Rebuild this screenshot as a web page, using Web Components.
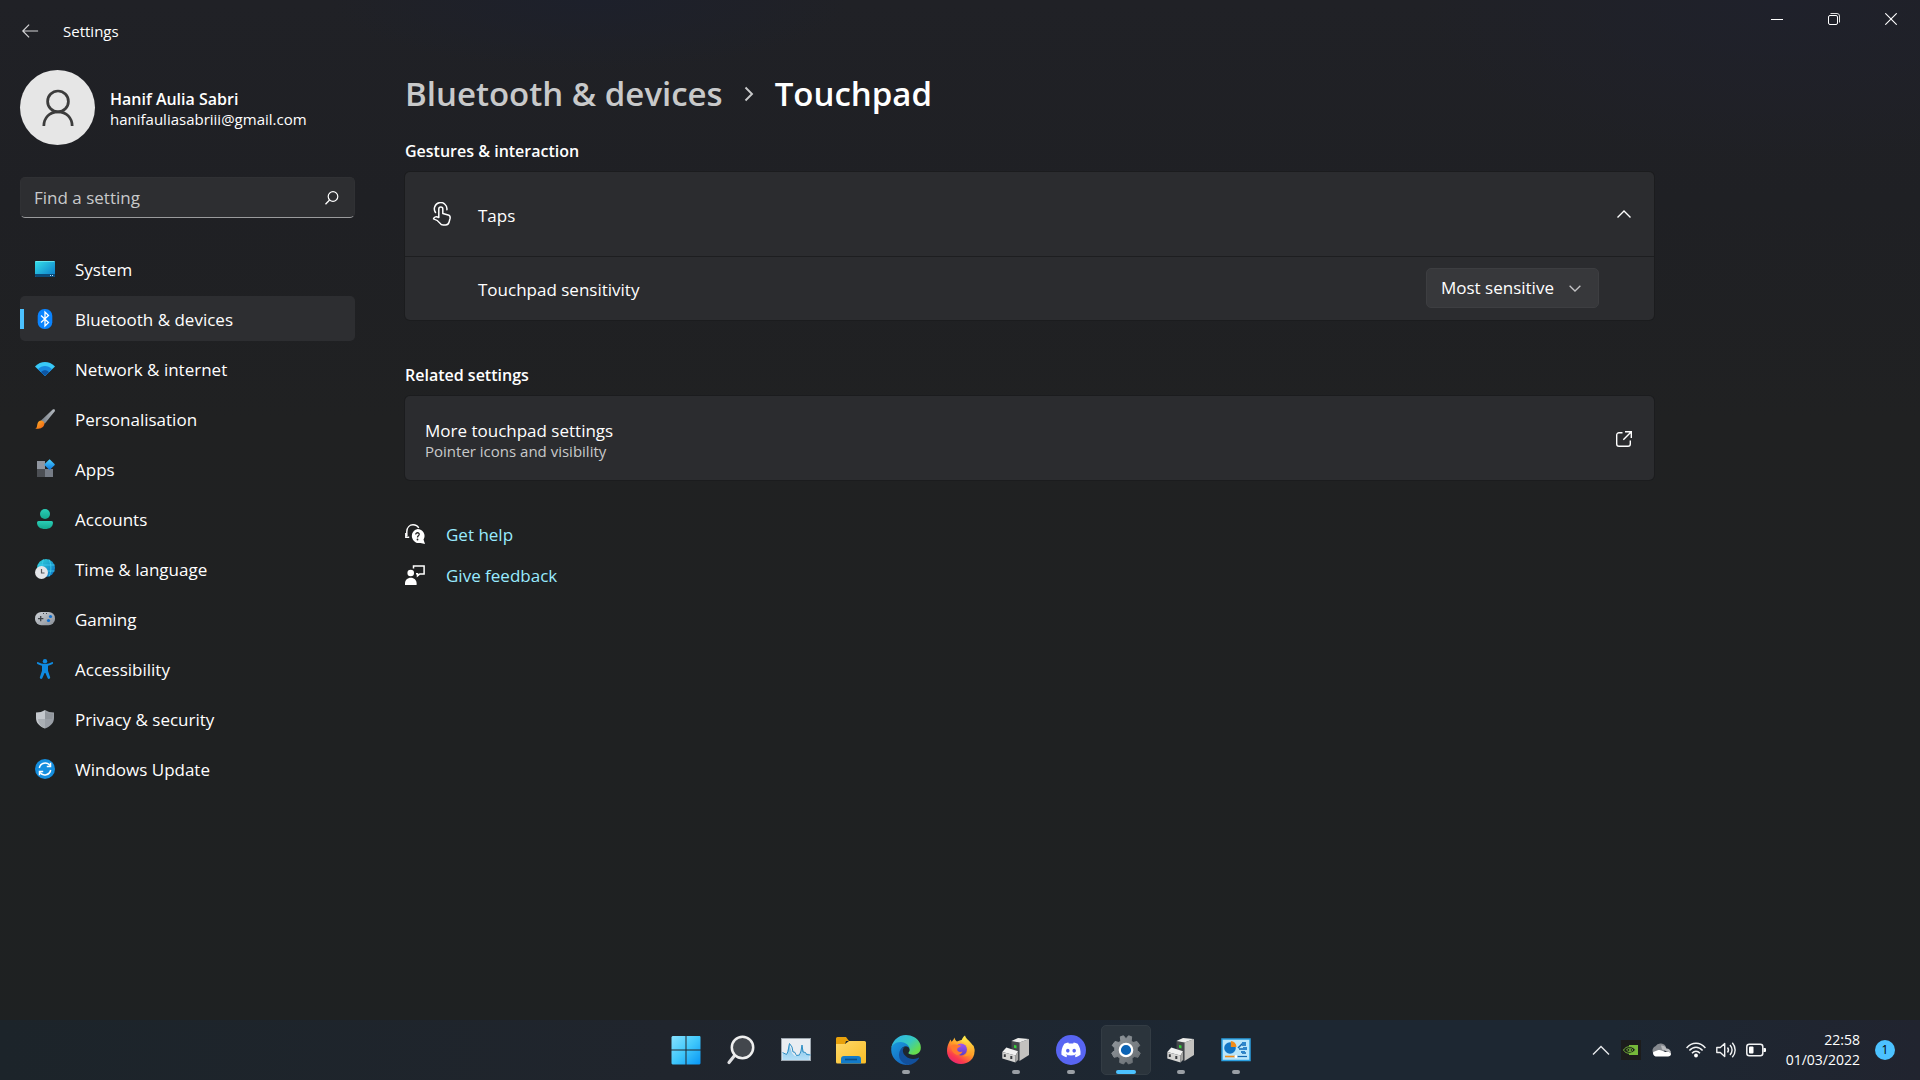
<!DOCTYPE html>
<html lang="en">
<head>
<meta charset="utf-8">
<title>Settings</title>
<style>
  html, body { height: 100%; }
  body {
    margin: 0;
    background: #1f2022;
    color: #fff;
    font-family: "Open Sans", "Noto Sans", sans-serif;
    font-size: 17px;
    line-height: 20px;
    --accent: #4cc2ff;
    --card: #2b2c2f;
    --muted: #c8c9ca;
    --link: #99ebff;
  }
</style>
</head>
<body>
<settings-desktop></settings-desktop>

<script>
const ICONS = {
  back: ['0 0 20 20', '<path d="M19 10H2M9 3L2 10l7 7" fill="none" stroke="#d4d4d6" stroke-width="1.3"/>'],
  minimize: ['0 0 12 12', '<path d="M0 6.5h12" stroke="#fff"/>'],
  restore: ['0 0 12 12', '<rect x=".5" y="2.5" width="9" height="9" rx="1.5" fill="none" stroke="#fff"/><path d="M2.5 .5H9A2.5 2.5 0 0 1 11.5 3v6.500" fill="none" stroke="#ddd"/>'],
  close: ['0 0 12 12', '<path d="M.3.3l11.400 11.400M11.700.3L.3 11.700" stroke="#fff" stroke-width="1.1"/>'],
  person: ['0 0 36 40', '<g fill="none" stroke="#3c3c3c" stroke-width="2.900"><circle cx="18" cy="13" r="11"/><path d="M3 39c0-8.500 6-15 15-15s15 6.500 15 15"/></g>'],
  search: ['0 0 14 14', '<circle cx="8" cy="5.500" r="4.800" fill="none" stroke="#fff" stroke-width="1.200"/><path d="M4.600 9L.5 13.200" stroke="#fff" stroke-width="1.300"/>'],
  system: ['0 0 20 20', '<defs><linearGradient id="a" x1="0" y1="0" x2="1" y2="1"><stop stop-color="#35e0ea"/><stop offset="1" stop-color="#0a77c8"/></linearGradient></defs><rect y="2" width="20" height="16" rx="1" fill="url(#a)"/><path d="M0 15h20v2a1 1 0 0 1-1 1H1a1 1 0 0 1-1-1z" fill="#0b4a78"/><path d="M15 16.500h1M17 16.500h1" stroke="#b9e4ff"/><path d="M.5 2.500h19" stroke="#7df0f4" opacity=".7"/>'],
  bluetooth: ['0 0 20 20', '<rect x="2.700" width="14.600" height="20" rx="6.700" fill="#0a84ff"/><path d="M6 6.500l7.500 7L10 17V3l3.500 3.500L6 13.500" fill="none" stroke="#fff" stroke-width="1.300"/>'],
  network: ['0 0 20 20', '<path d="M0 7.500C6 1.600 14 1.600 20 7.500L10 17z" fill="#38c9f7"/><path d="M2.900 10.300c4.500-4.300 9.700-4.300 14.200 0L10 17z" fill="#1787dd"/><path d="M6 13.200c2.500-2.500 5.500-2.500 8 0l-4 3.800z" fill="#0c55a3"/>'],
  brush: ['0 0 20 20', '<defs><linearGradient id="a"><stop stop-color="#777e86"/><stop offset="1" stop-color="#b4bac0"/></linearGradient><linearGradient id="b" x1="0" y1="0" x2="1" y2="1"><stop stop-color="#ffb629"/><stop offset="1" stop-color="#ef5d12"/></linearGradient></defs><path d="M6 11.500L17.700.6c1.500-1.100 2.900.3 1.900 1.900L9.700 14.800z" fill="url(#a)"/><path d="M6.300 11.500c1.800.3 3 1.500 3.100 3.400-.4 3.300-3.900 5.300-9.100 4.900 1.900-1 1.500-2.300 2-4.400.5-2.400 1.900-3.900 4-3.900z" fill="url(#b)"/>'],
  apps: ['0 0 20 20', '<defs><linearGradient id="a" x1="0" y1="0" x2="1" y2="1"><stop stop-color="#4fd4ff"/><stop offset="1" stop-color="#0a74dd"/></linearGradient></defs><path d="M2 2h8v8H2z" fill="#9096a0"/><path d="M2 10h8v8H2z" fill="#4c4f54"/><path d="M10 10h8v8h-8z" fill="#767c86"/><rect x="10.700" y="1.700" width="7.800" height="7.800" rx=".8" fill="url(#a)" transform="rotate(45 14.600 5.600)"/>'],
  accounts: ['0 0 20 20', '<defs><linearGradient id="a" x1="0" y1="0" x2="0" y2="1"><stop stop-color="#2acdb6"/><stop offset="1" stop-color="#14a88e"/></linearGradient></defs><circle cx="10" cy="5" r="5" fill="url(#a)"/><path d="M2 13.500a1.500 1.500 0 0 1 1.500-1.500h13a1.500 1.500 0 0 1 1.500 1.500C18 18 14.500 20 10 20s-8-2-8-6.500z" fill="url(#a)"/>'],
  time: ['0 0 20 20', '<defs><linearGradient id="a" x1="0" y1="0" x2="1" y2="1"><stop stop-color="#2fd6d8"/><stop offset="1" stop-color="#0a6cc4"/></linearGradient></defs><circle cx="11" cy="9" r="9" fill="url(#a)"/><path d="M3 6h16.500M3 12h16.500M8.500.5c-2 5-2 12 0 17M14 .5c2.500 5 2.500 12 0 17" fill="none" stroke="#41cdf0" opacity=".8"/><circle cx="6.500" cy="13.500" r="6.500" fill="#e3e5e8"/><path d="M6.500 10v4h3" fill="none" stroke="#55585c" stroke-width="1.200"/>'],
  gaming: ['0 0 20 20', '<defs><linearGradient id="a" x1="0" y1="0" x2="1" y2="1"><stop stop-color="#d0d4d9"/><stop offset="1" stop-color="#878d95"/></linearGradient></defs><rect y="3" width="20" height="13.200" rx="6.300" fill="url(#a)"/><path d="M3 9.600h5.400M5.700 7v5.300" stroke="#3d4146" stroke-width="1.300"/><circle cx="15.500" cy="7.500" r="1.600" fill="#0f6fcf"/><circle cx="13.500" cy="11.500" r="1.600" fill="#0f6fcf"/><path d="M8 4.500h1M11 4.500h1" stroke="#44484d"/>'],
  accessibility: ['0 0 20 20', '<g fill="#0f8ae0"><circle cx="10" cy="2.200" r="2.200"/><path d="M2.700 3c2.300 1.200 4.600 1.900 7.300 1.900s5-.7 7.300-1.900c1 .2 1 1.500.3 1.900-1.600.9-3 1.400-4.600 1.800v5l2.200 6.800c0 1.600-1.900 1.900-2.500.7L10.400 14h-.8l-2.300 5.200c-.6 1.200-2.500.9-2.500-.7L7 11.700v-5C5.400 6.300 4 5.800 2.400 4.900c-.7-.4-.7-1.700.3-1.900z"/></g>'],
  shield: ['0 0 20 20', '<path d="M10 1C7.500 2.700 4.500 3.500 1 3.500V9c0 5 3.500 8.400 9 10.500z" fill="#c4c8cd"/><path d="M10 1c2.500 1.700 5.500 2.500 9 2.500V9c0 5-3.500 8.400-9 10.500z" fill="#9a9fa6"/><path d="M3 10h7v9.500C6.500 18 3.500 15 3 10zM10 3v7h7l1-5c-3 0-6-.8-8-2z" fill="#85898f" opacity=".4"/>'],
  update: ['0 0 20 20', '<circle cx="10" cy="10" r="10" fill="#148edf"/><path d="M4.300 9A6 6 0 0 1 15 6.500M15.700 11A6 6 0 0 1 5 13.500" fill="none" stroke="#fff" stroke-width="1.500"/><path d="M15.500 3.800v3.700h-3.700M4.500 16.200v-3.700h3.700" fill="none" stroke="#fff" stroke-width="1.500"/>'],
  tap: ['0 0 20 24', '<g fill="none" stroke="#fff" stroke-width="1.500" stroke-linejoin="round" stroke-linecap="round"><path d="M3.500 10.500a6.300 6.300 0 1 1 11.400-2.800"/><path d="M6.800 15.500V6.900a2 2 0 0 1 4 0v4.600l5.300 1.400c1.700.5 2.300 1.700 2 3.300l-1 3.800c-.5 2-1.800 3-3.600 3h-2.300c-1.500 0-2.500-.7-3.300-1.900-1.500-2-3.700-3.400-6.400-4.200.7-2.300 3-2.600 5.300-1.400z"/></g>'],
  up: ['0 0 14 8', '<path d="M.5 7.500L7 1l6.500 6.500" fill="none" stroke="#fff" stroke-width="1.400"/>'],
  down: ['0 0 10 6', '<path d="M.4.600L5 5.200 9.600.600" fill="none" stroke="#c4c4c6" stroke-width="1.100"/>'],
  crumb: ['0 0 10 16', '<path d="M1.500 1.500L8 8l-6.500 6.500" fill="none" stroke="#c8c9ca" stroke-width="1.900"/>'],
  external: ['0 0 16 16', '<path d="M6.500 1.700H3A2.300 2.300 0 0 0 .700 4v9A2.300 2.300 0 0 0 3 15.300h9a2.300 2.300 0 0 0 2.300-2.300V9.500M9 .7h6.300V7M15.300.7L7.300 8.700" fill="none" stroke="#fff" stroke-width="1.400"/>'],
  help: ['0 0 20 20', '<path d="M1.800 12V7.500C2 3.500 4.700.8 8 .8c2.800 0 4.700 1.200 5.700 3.200" fill="none" stroke="#fff" stroke-width="1.500"/><path d="M.9 9v4.300h3.300" fill="none" stroke="#fff" stroke-width="1.600"/><path d="M12.500 5a7 7 0 0 1 6 10.600l1.500 4.300-4.600-1A7 7 0 1 1 12.500 5z" fill="#fff"/><path d="M10.700 10.500c.1-2.500 3.700-2.200 3.500 0-.1 1.300-1.700 1.400-1.700 2.900" fill="none" stroke="#222" stroke-width="1.300"/><circle cx="12.500" cy="15.500" r=".9" fill="#222"/>'],
  feedback: ['0 0 20 20', '<circle cx="5.700" cy="8" r="3.300" fill="#fff"/><path d="M0 20v-1.700C0 15 2.500 12.700 5.800 12.700s5.800 2.300 5.800 5.600V20z" fill="#fff"/><path d="M8.500 3.500V.9h10.600v8h-4.300l-2.300 1.900V8.700H11" fill="none" stroke="#fff" stroke-width="1.500"/>'],
  start: ['0 0 30 30', '<defs><linearGradient id="a" gradientUnits="userSpaceOnUse" x1="0" y1="0" x2="30" y2="30"><stop stop-color="#8be3ff"/><stop offset=".5" stop-color="#41c8fb"/><stop offset="1" stop-color="#0594f5"/></linearGradient></defs><path d="M1.500 1H14.500V14.500H.5V2zM15.500 1H29l.5 1v12.500h-14zM.5 15.500h14v14h-13l-1-1zM15.500 15.500h14v13l-1 1h-13z" fill="url(#a)"/>'],
  find: ['0 0 30 30', '<path d="M9.800 19L3 27.500" stroke="#dfe0e2" stroke-width="3.200" stroke-linecap="round"/><circle cx="16.500" cy="12.500" r="10.700" fill="#43474d" stroke="#efefef" stroke-width="2.500"/>'],
  monitor: ['0 0 30 30', '<defs><linearGradient id="a" x1="0" y1="0" x2="0" y2="1"><stop stop-color="#3fa9e4"/><stop offset="1" stop-color="#9ad8fa"/></linearGradient></defs><rect x=".5" y="3.500" width="29" height="22" fill="#e9edf2" stroke="#9ea7b0"/><path d="M1.500 18l4 2L8 9l3 9 3 3 3-1 2.500 0L21 10l2 8 5.500 1v6h-27z" fill="url(#a)" opacity=".65"/><path d="M1.500 17.500l4 2 1.500-3L8.500 8.500 11 12l1 5h1.500l2 3.500 3-.5 1.500-4 1-6 1 7 2.500.5 1 2 4 .5" fill="none" stroke="#2c8dc4"/>'],
  folder: ['0 0 30 30', '<defs><linearGradient id="a" x1="0" y1="0" x2="1" y2="1"><stop stop-color="#ffd96a"/><stop offset="1" stop-color="#f9bd26"/></linearGradient></defs><path d="M0 3.500A1.500 1.500 0 0 1 1.500 2H10l3 4h-3L8 12H0z" fill="#e8a10c"/><path d="M0 9h9l4-3h15.500A1.500 1.500 0 0 1 30 7.500V27a1.500 1.500 0 0 1-1.500 1.500h-27A1.500 1.500 0 0 1 0 27z" fill="url(#a)"/><path d="M5 28.500V24a3 3 0 0 1 3-3h14a3 3 0 0 1 3 3v4.500z" fill="#137bc9"/><path d="M9 24.500h12" stroke="#0a4f87" stroke-width="1.600"/>'],
  edge: ['0 0 256 259', '<defs><linearGradient id="a" x1=".2" y1="0" x2="1" y2=".6"><stop stop-color="#2fb5e4"/><stop offset=".55" stop-color="#36c9c0"/><stop offset="1" stop-color="#65dc4e"/></linearGradient><linearGradient id="b" x1="0" y1="0" x2=".6" y2="1"><stop stop-color="#1a9de0"/><stop offset="1" stop-color="#1467c0"/></linearGradient></defs><path fill="#12509c" d="M235.680 195.460a93.730 93.730 0 0 1-10.540 4.710 101.870 101.870 0 0 1-35.900 6.460c-47.320 0-88.540-32.550-88.540-74.320A31.480 31.480 0 0 1 117.130 105c-42.800 1.800-53.800 46.400-53.800 72.530 0 73.880 68.090 81.370 82.760 81.370 7.910 0 19.840-2.300 27-4.560l1.310-.44a128.340 128.340 0 0 0 66.600-52.800 4 4 0 0 0-5.320-5.640z"/><path fill="url(#b)" d="M105.730 241.420A79.200 79.200 0 0 1 83 220.080a80.720 80.720 0 0 1 29.520-120c3.120-1.470 8.450-4.130 15.540-4a32.350 32.350 0 0 1 25.690 13 31.880 31.880 0 0 1 6.360 18.660c0-.21 24.460-79.600-80-79.600-43.900 0-80 41.660-80 78.210a130.150 130.150 0 0 0 12.110 56 128 128 0 0 0 156.380 67.110 75.550 75.550 0 0 1-62.780-8z"/><path fill="url(#a)" d="M152.330 148.860c-.81 1.050-3.300 2.500-3.300 5.660 0 2.610 1.700 5.120 4.720 7.230 14.380 10 41.490 8.680 41.560 8.680a59.560 59.560 0 0 0 30.270-8.350 61.380 61.380 0 0 0 30.430-52.880c.26-22.410-8-37.310-11.340-43.910-21.190-41.440-66.920-65.280-116.670-65.280a128 128 0 0 0-128 126.200c.48-36.540 36.800-66.050 80-66.050 3.500 0 23.460.34 42 10.070 16.340 8.580 24.900 18.940 30.850 29.210 6.180 10.670 7.280 24.150 7.280 29.520s-2.740 13.330-7.800 19.900z"/>'],
  firefox: ['0 0 30 30', '<defs><linearGradient id="a" x1=".8" y1=".1" x2=".2" y2="1"><stop stop-color="#ffe44a"/><stop offset=".4" stop-color="#ff9a26"/><stop offset=".75" stop-color="#fb3a4e"/><stop offset="1" stop-color="#e2227c"/></linearGradient><linearGradient id="b" x1="0" y1="0" x2="0" y2="1"><stop stop-color="#a455f0"/><stop offset="1" stop-color="#5a3fc8"/></linearGradient><linearGradient id="c" x1=".5" y1="0" x2=".5" y2="1"><stop stop-color="#fff04c"/><stop offset="1" stop-color="#ff9524"/></linearGradient></defs><path d="M3.500 6.500c.4-1 .8-1.500 1.300-2 .1 1.200.4 1.800.8 2.200C7 5.800 8 3.500 8.500 2.500c.3 1.800 1 3.200 2.500 4 4-2.500 9-2 12 1 2-.6 5.500 4.500 5.500 9C28.500 24 22.500 29 15 29S1 23.500 1 16c0-3.500.9-6.500 2.500-9.500z" fill="url(#a)"/><circle cx="15" cy="14.500" r="6" fill="url(#b)"/><path d="M19 .5c-1.700 1.300-3.300 3.300-3.600 6 3.600.6 6.300 3 6.700 6.800.3 3.700-1.700 6.700-5 8 6.400.2 11.400-2 11.400-6.500 0-2.300-.9-4.300-2-5.300l-.4 1.500C25.600 6 20 5 19 .5z" fill="url(#c)"/><path d="M5 11c2-2 5-1.500 6.500-1l3.500.5c0 1.500-3.500 1.700-3.800 3.700-.2 2.800 3.300 3.300 5.300 2.300-1 3-4.500 4.500-7.500 2.500C6.500 17.300 5 14.500 5 11z" fill="#ff7a2c"/>'],
  device: ['0 0 30 30', '<path d="M10.500 6l8 1.500V26l-8-4z" fill="#44474a"/><path d="M18.500 7.500L28 4v16l-9.500 6z" fill="#c3c2bf"/><path d="M10.500 6L17 3l11 1-9.500 3.500z" fill="#ececea"/><path d="M13 10l2.500.6v2.800l-2.500-.6z" fill="#35d23a"/><path d="M1.300 17l4-4.500 11.700 3.700-2.500 4.300z" fill="#f1f1f0"/><path d="M1.300 17l13.200 3.500v7L1.300 23.500z" fill="#d5d5d3"/><path d="M14.500 20.500l2.500-4.300V25l-2.500 2.500z" fill="#a3a3a1"/><path d="M3.800 19.300v2.800M10.300 21v3" stroke="#3b3d40" stroke-width="2"/>'],
  discord: ['0 0 30 30', '<circle cx="15" cy="15" r="15" fill="#5865f2"/><path transform="translate(5.400 5.300) scale(.8)" fill="#fff" d="M20.317 4.370a19.791 19.791 0 00-4.885-1.515.074.074 0 00-.079.037c-.211.375-.445.865-.608 1.250-1.845-.276-3.680-.276-5.487 0-.164-.393-.406-.874-.618-1.250a.077.077 0 00-.079-.037 19.736 19.736 0 00-4.885 1.515.070.070 0 00-.032.028C.533 9.046-.319 13.580.099 18.058a.082.082 0 00.031.056c2.053 1.508 4.041 2.423 5.993 3.029a.078.078 0 00.084-.028c.462-.630.873-1.295 1.226-1.994a.076.076 0 00-.042-.106c-.653-.248-1.274-.550-1.872-.892a.077.077 0 01-.008-.128c.126-.094.252-.192.372-.291a.074.074 0 01.078-.011c3.928 1.793 8.180 1.793 12.061 0a.074.074 0 01.079.010c.120.099.246.198.373.292a.077.077 0 01-.007.128 12.299 12.299 0 01-1.873.891.077.077 0 00-.041.107c.360.698.772 1.363 1.225 1.993a.076.076 0 00.084.029c1.961-.607 3.950-1.522 6.002-3.029a.077.077 0 00.031-.055c.500-5.177-.838-9.674-3.549-13.660a.061.061 0 00-.031-.029zM8.020 15.331c-1.183 0-2.157-1.086-2.157-2.419 0-1.333.956-2.419 2.157-2.419 1.211 0 2.176 1.095 2.157 2.419 0 1.333-.956 2.419-2.157 2.419zm7.975 0c-1.183 0-2.157-1.086-2.157-2.419 0-1.333.955-2.419 2.157-2.419 1.211 0 2.176 1.095 2.157 2.419 0 1.333-.946 2.419-2.157 2.419z"/>'],
  gear: ['0 0 30 30', '<defs><linearGradient id="a" x1="0" y1="0" x2="1" y2="1"><stop stop-color="#949a9f"/><stop offset="1" stop-color="#646a6f"/></linearGradient></defs><path d="M9.800 5.800L9.300 1.800 12.500 .8 15 3.800 17.500 .8 20.700 1.800 20.200 5.800 22 7.500 26 6.500 28.800 10.500 26.200 13 26.300 15.500 29.300 18 27 22.300 23.200 21.500 21 23.300 21.300 27.500 17.500 29 15 26 12.500 29 8.700 27.500 9 23.300 6.800 21.500 3 22.300.700 18 3.700 15.500 3.800 13 1.200 10.500 4 6.500 8 7.500z" fill="url(#a)" stroke="url(#a)" stroke-linejoin="round"/><circle cx="15" cy="15" r="6.200" fill="#0b63b5" stroke="#fff" stroke-width="2.200"/>'],
  panel: ['0 0 30 30', '<rect x="1" y="4" width="28" height="21.500" fill="#b9e6fb" stroke="#2a9fe0" stroke-width="1.500"/><circle cx="9" cy="13" r="5.800" fill="#1175c5"/><path d="M9.800 12V6A6 6 0 0 1 15.500 12z" fill="#f28c18"/><path d="M17 13l4-4h3M18 14h7M21 10h4M21 18h4" fill="none" stroke="#1368b0" stroke-width="1.500"/><path d="M21 7h4v3h-4zM22 12h4v3h-4zM20 16h4v2h-4z" fill="#2c86cc"/><path d="M4 21.500h10" stroke="#f28c18" stroke-width="1.600"/><path d="M16 21.500h10" stroke="#1368b0" stroke-width="1.200"/><circle cx="15" cy="21.500" r="1.500" fill="#fff"/>'],
  trayup: ['0 0 20 20', '<path d="M2 14.500l8-8 8 8" fill="none" stroke="#e8eaec" stroke-width="1.400"/>'],
  nvidia: ['0 0 20 20', '<path d="M0 0h20v20H0z" fill="#1c1c1c"/><path d="M8 5h9v10H8z" fill="#76b93a"/><path d="M2.500 10c2-3 5.500-4 8.500-3 1.500.5 2.500 1.500 3.500 3-2 2.500-6 4.200-9 2.700-1.500-.6-2.400-1.600-3-2.700z" fill="#1c1c1c" stroke="#76b93a"/><path d="M5.500 10c1.500-2 4.500-2.500 6.500 0-1.500 2-4.500 2.200-6.500 0z" fill="none" stroke="#76b93a"/><circle cx="9" cy="10" r="1" fill="#76b93a"/>'],
  cloud: ['0 0 20 20', '<path d="M5 15.500a5 5 0 0 1-.6-9.300 6 6 0 0 1 10.800 1.600L10 15.500z" fill="#85898e"/><path d="M10 5.500a6 6 0 0 1 5.500 3A4.500 4.500 0 0 1 20 13l-9-3.500z" fill="#b8babd"/><path d="M4.500 16.500A4 4 0 0 1 2.200 12l4.500-1.700c1.500-.7 2.800-.4 3.700.2l4 1.500c3-.8 5.600.2 5.600 2 0 1.500-1.300 2.500-3 2.500z" fill="#fff"/>'],
  wifi: ['0 0 20 20', '<g fill="none" stroke="#f1f2f3" stroke-width="1.500"><path d="M.6 8C6 1.700 14 1.700 19.400 8"/><path d="M3.400 10.600c3.900-4.500 9.300-4.500 13.200 0"/><path d="M6 13.300c2.400-2.700 5.600-2.700 8 0"/></g><circle cx="10" cy="15.500" r="1.900" fill="#fff"/>'],
  volume: ['0 0 20 20', '<g fill="none" stroke="#f1f2f3" stroke-width="1.400" stroke-linejoin="round"><path d="M.8 7.500h3.500L8.700 3.500v13L4.300 12.500H.8z"/><path d="M11.500 7.500c1.200 1.500 1.200 3.500 0 5M14 5c2.500 3 2.500 7 0 10M16.300 2.700c3.800 4.300 3.800 10.300 0 14.600"/></g>'],
  battery: ['0 0 20 20', '<rect x=".8" y="4.300" width="16" height="11.400" rx="2.500" fill="none" stroke="#f1f2f3" stroke-width="1.500"/><path d="M17.500 8H19a1 1 0 0 1 1 1v2a1 1 0 0 1-1 1h-1.500z" fill="#fff"/><rect x="3" y="6.500" width="4.500" height="7" rx="1" fill="#fff"/>']
};

const define = (name, html, setup) => {
  const template = document.createElement('template');
  template.innerHTML = '<style>*{box-sizing:border-box}:host{display:block}:host([hidden]){display:none}</style>' + html;
  customElements.define(name, class extends HTMLElement {
    constructor() {
      super();
      this.attachShadow({ mode: 'open' }).append(template.content.cloneNode(true));
    }
    connectedCallback() {
      if (setup) setup(this, this.shadowRoot);
    }
  });
};

customElements.define('ui-icon', class extends HTMLElement {
  static observedAttributes = ['name'];
  constructor() {
    super();
    this.attachShadow({ mode: 'open' }).innerHTML = `
<style>
  :host { display: inline-flex; flex: none; width: var(--w, 20px); height: var(--h, var(--w, 20px)); }
  svg { width: 100%; height: 100%; display: block; }
</style>
<svg aria-hidden="true"></svg>`;
  }
  attributeChangedCallback(attribute, before, name) {
    if (!ICONS[name]) return;
    const svg = this.shadowRoot.querySelector('svg');
    svg.setAttribute('viewBox', ICONS[name][0]);
    svg.innerHTML = ICONS[name][1];
  }
});

const passIcon = (el, root) => root.querySelector('ui-icon').setAttribute('name', el.getAttribute('icon'));

define('title-bar', `
<style>
  :host { display: flex; justify-content: space-between; height: 60px; padding-left: 12px; }
  .left { display: flex; align-items: center; gap: 15px; padding-top: 2px; font-size: 15px; }
  .right { display: flex; align-items: flex-start; padding-right: 1px; }
  button { display: grid; place-items: center; border: 0; padding: 0; background: none; color: inherit; }
  .left button { width: 36px; height: 36px; --w: 18px; }
  .right button { width: 57px; height: 38px; --w: 12px; }
</style>
<div class="left">
  <button aria-label="Back"><ui-icon name="back"></ui-icon></button>
  <span>Settings</span>
</div>
<div class="right">
  <button aria-label="Minimise"><ui-icon name="minimize"></ui-icon></button>
  <button aria-label="Restore"><ui-icon name="restore"></ui-icon></button>
  <button aria-label="Close"><ui-icon name="close"></ui-icon></button>
</div>`);

define('user-card', `
<style>
  :host { display: flex; align-items: center; gap: 15px; }
  .avatar { display: grid; place-items: center; width: 75px; height: 75px; border-radius: 50%; background: #e6e6e6; --w: 34px; --h: 38px; }
  .text { padding-top: 2px; }
  .name { font-size: 16px; font-weight: 600; }
  .mail { font-size: 15px; }
</style>
<div class="avatar"><ui-icon name="person"></ui-icon></div>
<div class="text">
  <div class="name"><slot name="name"></slot></div>
  <div class="mail"><slot name="mail"></slot></div>
</div>`);

define('search-box', `
<style>
  label { display: flex; align-items: center; height: 41px; padding: 0 15px 0 13px; border-radius: 5px;
    border: 1px solid #303134; border-bottom-color: #9a9b9d; background: #2d2e31; --w: 14px; }
  input { flex: 1; min-width: 0; padding: 0; border: 0; outline: 0; background: none; color: inherit; font: inherit; }
  input::placeholder { color: #c8c9ca; opacity: 1; }
</style>
<label><input type="text" placeholder="Find a setting" aria-label="Find a setting"><ui-icon name="search"></ui-icon></label>`);

define('nav-item', `
<style>
  a { display: flex; align-items: center; gap: 20px; height: 45px; padding-left: 15px; border-radius: 5px;
    color: inherit; text-decoration: none; }
  span { padding-top: 2px; }
  :host([selected]) a { background: linear-gradient(90deg, var(--accent), var(--accent)) left center / 4px 20px no-repeat #2d2e31; }
</style>
<a href="#"><ui-icon></ui-icon><span><slot></slot></span></a>`, (el, root) => {
  passIcon(el, root);
  if (el.hasAttribute('selected')) root.querySelector('a').setAttribute('aria-current', 'page');
});

define('side-nav', `
<style>
  :host { display: flex; flex-direction: column; gap: 32px; padding-top: 10px; }
  nav { display: flex; flex-direction: column; gap: 5px; margin-top: -4px; }
</style>
<user-card><span slot="name">Hanif Aulia Sabri</span><span slot="mail">hanifauliasabriii@gmail.com</span></user-card>
<search-box></search-box>
<nav aria-label="Settings">
  <nav-item icon="system">System</nav-item>
  <nav-item icon="bluetooth" selected>Bluetooth &amp; devices</nav-item>
  <nav-item icon="network">Network &amp; internet</nav-item>
  <nav-item icon="brush">Personalisation</nav-item>
  <nav-item icon="apps">Apps</nav-item>
  <nav-item icon="accounts">Accounts</nav-item>
  <nav-item icon="time">Time &amp; language</nav-item>
  <nav-item icon="gaming">Gaming</nav-item>
  <nav-item icon="accessibility">Accessibility</nav-item>
  <nav-item icon="shield">Privacy &amp; security</nav-item>
  <nav-item icon="update">Windows Update</nav-item>
</nav>`);

define('bread-crumb', `
<style>
  h1 { display: flex; align-items: center; gap: 21px; margin: 0; font-size: 33px; line-height: 48px; font-weight: 600; --w: 10px; --h: 16px; }
  a { color: #c8c9ca; text-decoration: none; }
</style>
<h1><a href="#"><slot name="parent"></slot></a><ui-icon name="crumb"></ui-icon><span><slot></slot></span></h1>`);

define('settings-group', `
<style>
  h2 { margin: 0 0 11px; font-size: 16px; line-height: 20px; font-weight: 600; }
  .cards { overflow: hidden; border-radius: 5px; background: var(--card); box-shadow: 0 0 0 1px #1b1c1e; }
</style>
<h2></h2><div class="cards"><slot></slot></div>`, (el, root) => {
  root.querySelector('h2').textContent = el.getAttribute('heading');
});

define('expander-row', `
<style>
  button { display: flex; align-items: center; gap: 26px; width: 100%; height: 84px; padding: 0 23px 0 27px; border: 0;
    background: none; color: inherit; font: inherit; text-align: left; }
  span { flex: 1; padding-top: 4px; }
  .tap { --w: 20px; --h: 24px; }
  .up { --w: 14px; --h: 8px; }
</style>
<button aria-expanded="true"><ui-icon class="tap" name="tap"></ui-icon><span><slot></slot></span><ui-icon class="up" name="up"></ui-icon></button>`);

define('choice-row', `
<style>
  :host { border-top: 1px solid #1d1e20; }
  .row { display: flex; align-items: center; justify-content: space-between; height: 63px; padding: 0 55px 1px 73px; }
  label { padding-top: 4px; }
  .drop { display: grid; align-items: center; --w: 12px; --h: 7px; }
  .drop > * { grid-area: 1 / 1; }
  select { appearance: none; width: 173px; height: 40px; padding: 0 40px 0 14px; border: 1px solid #3d3e41; border-radius: 5px;
    background: #37383b; color: inherit; font: inherit; }
  ui-icon { justify-self: end; margin-right: 18px; pointer-events: none; }
</style>
<div class="row">
  <label for="level"><slot></slot></label>
  <div class="drop">
    <select id="level"><option>Most sensitive</option><option>High sensitivity</option><option>Medium sensitivity</option><option>Low sensitivity</option></select>
    <ui-icon name="down"></ui-icon>
  </div>
</div>`);

define('link-row', `
<style>
  a { display: flex; align-items: center; justify-content: space-between; height: 84px; padding: 1px 22px 0 20px;
    color: inherit; text-decoration: none; --w: 16px; }
  .text { padding-top: 5px; }
  .note { color: var(--muted); font-size: 15px; }
</style>
<a href="#"><div class="text"><slot></slot><div class="note"><slot name="note"></slot></div></div><ui-icon name="external"></ui-icon></a>`);

define('help-link', `
<style>
  div { display: flex; align-items: center; gap: 21px; height: 41px; }
  a { color: var(--link); text-decoration: none; padding-top: 3px; }
</style>
<div><ui-icon></ui-icon><a href="#"><slot></slot></a></div>`, passIcon);

define('touchpad-page', `
<style>
  :host { max-width: 1249px; padding-top: 10px; }
  .groups { display: flex; flex-direction: column; gap: 45px; margin-top: 23px; }
  .help { margin-top: 33px; }
</style>
<bread-crumb><span slot="parent">Bluetooth &amp; devices</span>Touchpad</bread-crumb>
<div class="groups">
  <settings-group heading="Gestures &amp; interaction">
    <expander-row>Taps</expander-row>
    <choice-row>Touchpad sensitivity</choice-row>
  </settings-group>
  <settings-group heading="Related settings">
    <link-row>More touchpad settings<span slot="note">Pointer icons and visibility</span></link-row>
  </settings-group>
</div>
<div class="help">
  <help-link icon="help">Get help</help-link>
  <help-link icon="feedback">Give feedback</help-link>
</div>`);

define('task-button', `
<style>
  button { position: relative; display: grid; place-items: center; width: 50px; height: 50px; padding: 0; border: 1px solid transparent;
    border-radius: 5px; background: none; --w: 30px; }
  :host([active]) button { background: #2b343c; border-color: #333c44; }
  i { position: absolute; bottom: 0; left: 50%; width: 8px; height: 4px; margin-left: -4px; border-radius: 2px; background: #9a9fa5; }
  :host(:not([running])) i { display: none; }
  :host([active]) i { width: 20px; margin-left: -10px; background: var(--accent); }
</style>
<button><ui-icon></ui-icon><i></i></button>`, (el, root) => {
  passIcon(el, root);
  root.querySelector('button').setAttribute('aria-label', el.getAttribute('label'));
});

define('task-bar', `
<style>
  :host { display: grid; grid-template-columns: 1fr auto 1fr; align-items: center; height: 60px; padding-left: 2px;
    background: linear-gradient(90deg, #1c242a 0%, #20252d 35%, #1d2732 62%, #1d2732 84%, #21242f 100%); }
  .apps { grid-column: 2; display: flex; gap: 5px; }
  .tray { display: flex; justify-content: flex-end; align-items: center; gap: 10px; padding-right: 25px; }
  .hidden-icons { display: flex; align-items: center; gap: 10px; margin-right: 5px; }
  button { display: flex; align-items: center; gap: 10px; padding: 0; border: 0; background: none; color: inherit; font: inherit; }
  .clock { display: block; margin-left: 10px; text-align: right; font-size: 14px; line-height: 20px; }
  .badge { display: block; width: 20px; height: 20px; margin-left: 5px; border-radius: 50%; background: var(--accent); color: #000;
    font-size: 12px; line-height: 20px; text-align: center; }
</style>
<div class="apps">
  <task-button icon="start" label="Start"></task-button>
  <task-button icon="find" label="Search"></task-button>
  <task-button icon="monitor" label="Monitor"></task-button>
  <task-button icon="folder" label="File Explorer"></task-button>
  <task-button icon="edge" label="Edge" running></task-button>
  <task-button icon="firefox" label="Firefox"></task-button>
  <task-button icon="device" label="Device" running></task-button>
  <task-button icon="discord" label="Discord" running></task-button>
  <task-button icon="gear" label="Settings" running active></task-button>
  <task-button icon="device" label="Device" running></task-button>
  <task-button icon="panel" label="Control Panel" running></task-button>
</div>
<div class="tray">
  <div class="hidden-icons">
    <button aria-label="Show hidden icons"><ui-icon name="trayup"></ui-icon></button>
    <button aria-label="NVIDIA"><ui-icon name="nvidia"></ui-icon></button>
    <button aria-label="OneDrive"><ui-icon name="cloud"></ui-icon></button>
  </div>
  <button aria-label="Network, volume and battery"><ui-icon name="wifi"></ui-icon><ui-icon name="volume"></ui-icon><ui-icon name="battery"></ui-icon></button>
  <button class="clock"><div>22:58</div><div>01/03/2022</div></button>
  <button class="badge" aria-label="1 notification">1</button>
</div>`);

define('settings-desktop', `
<style>
  :host { display: flex; flex-direction: column; min-height: 100vh;
    background: radial-gradient(ellipse 260px 70px at 590px 0, #1d202b, transparent),
      radial-gradient(ellipse 360px 160px at 1780px 0, #1f212b, transparent),
      linear-gradient(180deg, #202126 0, #1f2024 200px, #202122 420px, #1e2122 100%); }
  .body { flex: 1; display: grid; grid-template-columns: 335px minmax(0, 1fr); gap: 50px; padding: 0 20px; }
</style>
<title-bar></title-bar>
<div class="body"><side-nav></side-nav><main><touchpad-page></touchpad-page></main></div>
<task-bar></task-bar>`);
</script>
</body>
</html>
